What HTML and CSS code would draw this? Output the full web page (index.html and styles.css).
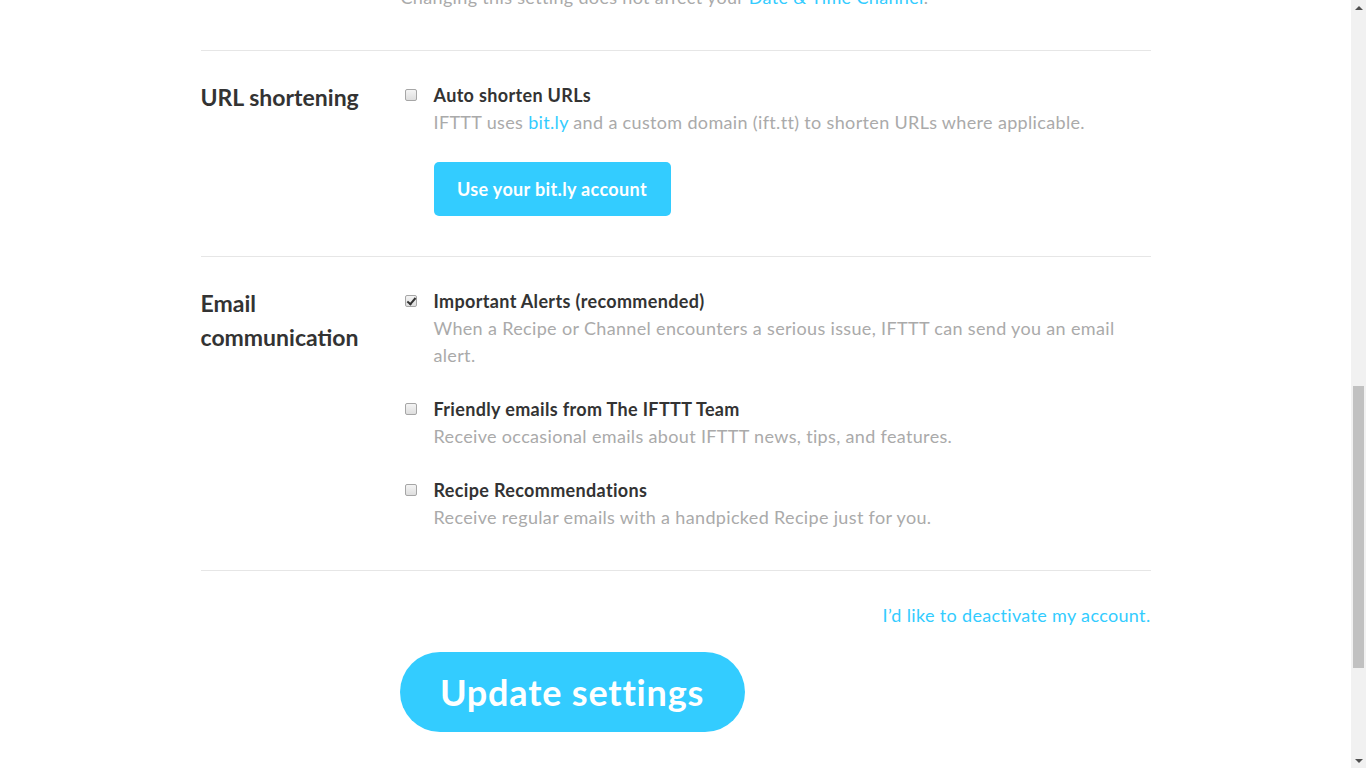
FILE: index.html
```html
<!DOCTYPE html>
<html lang="en">
<head>
<meta charset="utf-8">
<title>Settings</title>
<link rel="stylesheet" href="styles.css">
</head>
<body>
<div class="viewport">
  <main class="page">
    <section class="row row-top">
      <div class="row-head"></div>
      <div class="row-body">
        <p class="desc">Changing this setting does not affect your <a href="#" class="link">Date &amp; Time Channel</a>.</p>
      </div>
    </section>

    <section class="row">
      <h2 class="row-head">URL shortening</h2>
      <div class="row-body">
        <div class="option">
          <input type="checkbox" class="check">
          <div class="option-text">
            <div class="label">Auto shorten URLs</div>
            <p class="desc">IFTTT uses <a href="#" class="link">bit.ly</a> and a custom domain (ift.tt) to shorten URLs where applicable.</p>
            <a href="#" class="btn">Use your bit.ly account</a>
          </div>
        </div>
      </div>
    </section>

    <section class="row row-email">
      <h2 class="row-head">Email communication</h2>
      <div class="row-body">
        <div class="option">
          <input type="checkbox" class="check" checked>
          <div class="option-text">
            <div class="label">Important Alerts (recommended)</div>
            <p class="desc">When a Recipe or Channel encounters a serious issue, IFTTT can send you an email alert.</p>
          </div>
        </div>
        <div class="option">
          <input type="checkbox" class="check">
          <div class="option-text">
            <div class="label">Friendly emails from The IFTTT Team</div>
            <p class="desc">Receive occasional emails about IFTTT news, tips, and features.</p>
          </div>
        </div>
        <div class="option">
          <input type="checkbox" class="check">
          <div class="option-text">
            <div class="label">Recipe Recommendations</div>
            <p class="desc">Receive regular emails with a handpicked Recipe just for you.</p>
          </div>
        </div>
      </div>
    </section>

    <div class="footer">
      <a href="#" class="link deactivate">I’d like to deactivate my account.</a>
      <div class="submit-row">
        <button type="button" class="btn-big">Update settings</button>
      </div>
    </div>
  </main>

  <div class="scrollbar">
    <div class="sb-arrow sb-up"></div>
    <div class="sb-track">
      <div class="sb-thumb"></div>
    </div>
    <div class="sb-arrow sb-down"></div>
  </div>
</div>
</body>
</html>
```
FILE: styles.css
```css
* { box-sizing: border-box; }
html, body {
  margin: 0;
  height: 768px;
  overflow: hidden;
  background: #fff;
}
body {
  font-family: Lato, "Open Sans", sans-serif;
  color: #333;
}
.viewport {
  display: flex;
  height: 768px;
}
.page {
  flex: 1;
  width: 950px;
  max-width: 950px;
  margin: -16px auto 0;
}
.row {
  display: flex;
  padding: 31px 0 40px;
  border-top: 1px solid #e6e6e6;
}
.row-top {
  border-top: none;
  padding-top: 0;
  padding-bottom: 39px;
}
.row-email {
  padding-bottom: 39px;
}
.row-head {
  width: 200px;
  flex: none;
  margin: -2px 0 0;
  font-size: 23px;
  line-height: 34px;
  font-weight: 700;
  color: #333;
}
.row-body {
  flex: 1;
  min-width: 0;
}
.desc {
  margin: 0;
  font-size: 18px;
  letter-spacing: 0.34px;
  line-height: 27px;
  color: #aaa;
}
.link {
  color: #33ccff;
  text-decoration: none;
}
.option {
  display: flex;
  align-items: flex-start;
  margin-bottom: 27px;
}
.option:last-child { margin-bottom: 0; }
.check {
  appearance: none;
  -webkit-appearance: none;
  flex: none;
  width: 12px;
  height: 12px;
  margin: 7px 17px 0 4px;
  border: 1px solid #a6a6a6;
  border-radius: 2px;
  background: linear-gradient(#f4f4f4, #dedede);
  position: relative;
}
.check:checked::before {
  content: "";
  position: absolute;
  left: 3px;
  top: 0px;
  width: 3px;
  height: 7px;
  border-right: 2px solid #333;
  border-bottom: 2px solid #333;
  transform: rotate(40deg);
}
.option-text {
  flex: 1;
}
.label {
  font-size: 18px;
  letter-spacing: 0.34px;
  line-height: 27px;
  font-weight: 700;
  color: #333;
}
.btn {
  display: inline-flex;
  align-items: center;
  justify-content: center;
  margin-top: 26px;
  width: 237px;
  height: 54px;
  border-radius: 5px;
  background: #33ccff;
  color: #fff;
  font-size: 18px;
  letter-spacing: 0.35px;
  font-weight: 700;
  text-decoration: none;
}
.footer {
  border-top: 1px solid #e6e6e6;
  padding-top: 31px;
  display: flex;
  flex-direction: column;
  align-items: flex-end;
}
.deactivate {
  font-size: 18px;
  letter-spacing: 0.34px;
  line-height: 27px;
}
.submit-row {
  align-self: stretch;
  padding-left: 199px;
  margin-top: 23px;
}
.btn-big {
  width: 345px;
  height: 80px;
  border: none;
  border-radius: 40px;
  background: #33ccff;
  color: #fff;
  font-family: inherit;
  font-size: 36px;
  letter-spacing: 0.8px;
  font-weight: 700;
  padding: 0;
}
.scrollbar {
  flex: none;
  width: 15px;
  height: 768px;
  background: #f1f1f1;
  display: flex;
  flex-direction: column;
}
.sb-arrow {
  height: 15px;
  flex: none;
  display: flex;
  align-items: center;
  justify-content: center;
}
.sb-up::before {
  content: "";
  border-left: 4px solid transparent;
  border-right: 4px solid transparent;
  border-bottom: 4px solid #505050;
}
.sb-down::before {
  content: "";
  border-left: 4px solid transparent;
  border-right: 4px solid transparent;
  border-top: 4px solid #505050;
}
.sb-track {
  flex: 1;
  padding: 371px 2px 0;
}
.sb-thumb {
  height: 282px;
  background: #c1c1c1;
}
```
